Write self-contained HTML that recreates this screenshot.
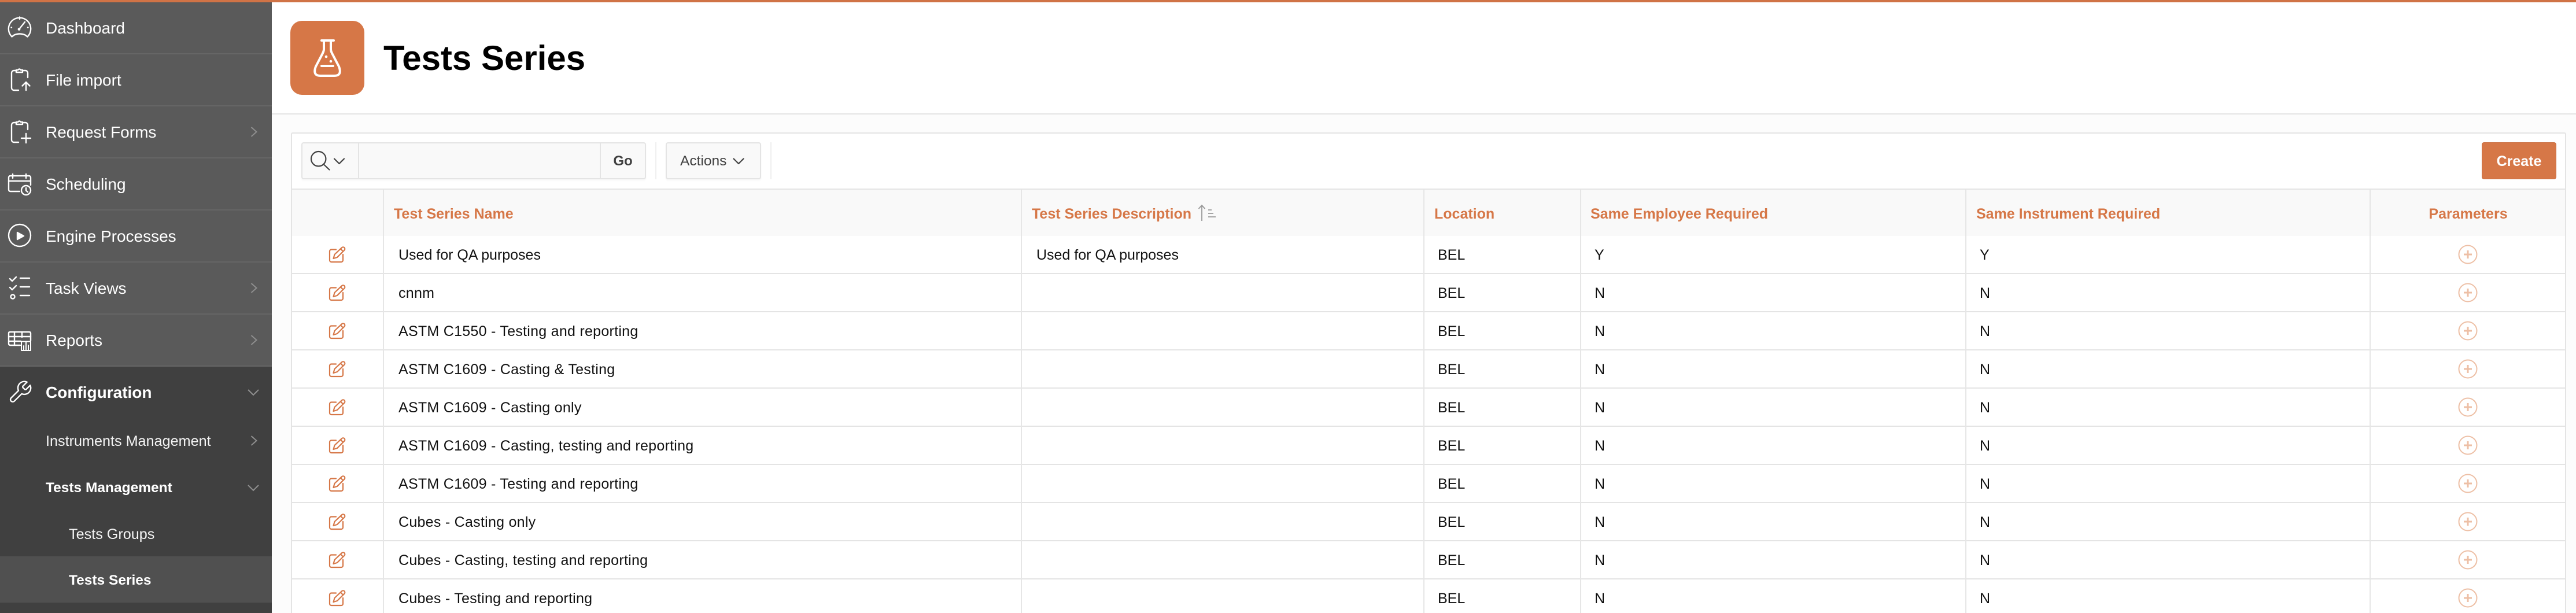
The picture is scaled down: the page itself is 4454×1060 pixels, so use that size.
<!DOCTYPE html>
<html lang="en">
<head>
<meta charset="utf-8">
<title>Tests Series</title>
<style>
html,body{margin:0;padding:0;width:4454px;height:1060px;overflow:hidden;background:#fcfcfc;font-family:"Liberation Sans",sans-serif;color:#111}
*{box-sizing:border-box}
#wrap{position:absolute;left:0;top:0;width:4454px;height:1060px;overflow:hidden;background:#fcfcfc}
.a{position:absolute}
#top{left:0;top:0;width:4454px;height:4px;background:#d07346;z-index:5}
#side{left:0;top:0;width:470px;height:1060px;background:#404040}
#sideTop{left:0;top:0;width:470px;height:634px;background:#5a5a5a}
.sep{left:0;width:470px;height:2px;background:#666}
.m{position:absolute;left:79px;height:40px;line-height:40px;font-size:28px;color:#fff;white-space:nowrap;margin-top:1px}
.s{position:absolute;left:79px;height:36px;line-height:36px;font-size:25.2px;color:#f4f4f4;white-space:nowrap;margin-top:1px}
.b{font-weight:bold}
#hl{left:0;top:962px;width:470px;height:80px;background:#505050}
#head{left:470px;top:4px;width:3984px;height:194px;background:#fff;border-bottom:2px solid #e4e4e4}
#ico{left:502px;top:36px;width:128px;height:128px;background:#d67747;border-radius:20px}
#title{left:663px;top:66px;height:70px;line-height:70px;font-size:60px;font-weight:bold;color:#000;white-space:nowrap}
#card{left:503px;top:229px;width:3934px;height:831px;background:#fff;border:2px solid #e4e4e4;border-bottom:0;border-radius:3px 3px 0 0}
#grp{left:521px;top:246px;width:596px;height:64px;background:#f9f9f9;border:2px solid #e4e4e4;border-radius:4px;box-shadow:0 2px 3px rgba(0,0,0,.04)}
#act{left:1151px;top:246px;width:165px;height:64px;background:#f9f9f9;border:2px solid #e4e4e4;border-radius:4px;box-shadow:0 2px 3px rgba(0,0,0,.04)}
.v{width:2px;background:#e6e6e6}
.d{background:#efefef}
#create{left:4291px;top:246px;width:129px;height:64px;background:#d67747;border:1px solid #c96c3e;border-radius:4px;color:#fff;font-weight:bold;font-size:25px;line-height:64px;text-align:center}
#hrow{left:505px;top:328px;width:3930px;height:80px;background:#f9f9f9}
.line{left:505px;width:3930px;height:2px;background:#e4e4e4}
.h{position:absolute;top:352px;height:36px;line-height:36px;font-size:25px;font-weight:bold;color:#d67747;white-space:nowrap}
.c{position:absolute;height:36px;line-height:36px;font-size:25px;color:#111;white-space:nowrap;margin-top:1px}
.n{letter-spacing:.27px}
svg{position:absolute;left:0;top:0;overflow:visible}
</style>
</head>
<body>
<div id="wrap">
<div class="a" id="side"></div>
<div class="a" id="sideTop"></div>
<div class="a" id="hl"></div>
<div class="a sep" style="top:92px"></div>
<div class="a sep" style="top:182px"></div>
<div class="a sep" style="top:272px"></div>
<div class="a sep" style="top:362px"></div>
<div class="a sep" style="top:452px"></div>
<div class="a sep" style="top:542px"></div>
<div class="a sep" style="top:632px"></div>

<div class="m" style="top:28px">Dashboard</div>
<div class="m" style="top:118px">File import</div>
<div class="m" style="top:208px">Request Forms</div>
<div class="m" style="top:298px">Scheduling</div>
<div class="m" style="top:388px">Engine Processes</div>
<div class="m" style="top:478px">Task Views</div>
<div class="m" style="top:568px">Reports</div>
<div class="m b" style="top:658px">Configuration</div>
<div class="s" style="top:744px">Instruments Management</div>
<div class="s b" style="top:825px;font-size:24.5px;color:#fff">Tests Management</div>
<div class="s" style="top:905px;left:119px">Tests Groups</div>
<div class="s b" style="top:985px;left:119px;font-size:24.5px;color:#fff">Tests Series</div>

<div class="a" id="head"></div>
<div class="a" id="top"></div>
<div class="a" id="ico"></div>
<div class="a" id="title">Tests Series</div>

<div class="a" id="card"></div>
<div class="a" id="grp"></div>
<div class="a v" style="left:619px;top:247px;height:62px;background:#e4e4e4"></div>
<div class="a v" style="left:1037px;top:247px;height:62px;background:#e4e4e4"></div>
<div class="a" style="left:1039px;top:262px;width:76px;height:34px;line-height:34px;text-align:center;font-size:24px;font-weight:bold;color:#404040">Go</div>
<div class="a v d" style="left:1133px;top:246px;height:64px"></div>
<div class="a" id="act"></div>
<div class="a" style="left:1176px;top:261px;height:36px;line-height:36px;font-size:24.5px;color:#404040">Actions</div>
<div class="a v d" style="left:1332px;top:246px;height:64px"></div>
<div class="a" id="create">Create</div>

<div class="a" id="hrow"></div>
<div class="a line" style="top:326px"></div>
<div class="h" style="left:681px">Test Series Name</div>
<div class="h" style="left:1784px">Test Series Description</div>
<div class="h" style="left:2480px">Location</div>
<div class="h" style="left:2750px">Same Employee Required</div>
<div class="h" style="left:3417px">Same Instrument Required</div>
<div class="h" style="left:4098px;width:339px;text-align:center">Parameters</div>

<div class="a line" style="top:472px"></div>
<div class="a line" style="top:538px"></div>
<div class="a line" style="top:604px"></div>
<div class="a line" style="top:670px"></div>
<div class="a line" style="top:736px"></div>
<div class="a line" style="top:802px"></div>
<div class="a line" style="top:868px"></div>
<div class="a line" style="top:934px"></div>
<div class="a line" style="top:1000px"></div>

<div class="a v" style="left:662px;top:328px;height:732px"></div>
<div class="a v" style="left:1765px;top:328px;height:732px"></div>
<div class="a v" style="left:2461px;top:328px;height:732px"></div>
<div class="a v" style="left:2732px;top:328px;height:732px"></div>
<div class="a v" style="left:3398px;top:328px;height:732px"></div>
<div class="a v" style="left:4097px;top:328px;height:732px"></div>

<div class="c" style="left:689px;top:422px">Used for QA purposes</div><div class="c" style="left:1792px;top:422px">Used for QA purposes</div><div class="c" style="left:2486px;top:422px">BEL</div><div class="c" style="left:2757px;top:422px">Y</div><div class="c" style="left:3423px;top:422px">Y</div>
<div class="c n" style="left:689px;top:488px">cnnm</div><div class="c" style="left:2486px;top:488px">BEL</div><div class="c" style="left:2757px;top:488px">N</div><div class="c" style="left:3423px;top:488px">N</div>
<div class="c n" style="left:689px;top:554px">ASTM C1550 - Testing and reporting</div><div class="c" style="left:2486px;top:554px">BEL</div><div class="c" style="left:2757px;top:554px">N</div><div class="c" style="left:3423px;top:554px">N</div>
<div class="c n" style="left:689px;top:620px">ASTM C1609 - Casting &amp; Testing</div><div class="c" style="left:2486px;top:620px">BEL</div><div class="c" style="left:2757px;top:620px">N</div><div class="c" style="left:3423px;top:620px">N</div>
<div class="c n" style="left:689px;top:686px">ASTM C1609 - Casting only</div><div class="c" style="left:2486px;top:686px">BEL</div><div class="c" style="left:2757px;top:686px">N</div><div class="c" style="left:3423px;top:686px">N</div>
<div class="c n" style="left:689px;top:752px">ASTM C1609 - Casting, testing and reporting</div><div class="c" style="left:2486px;top:752px">BEL</div><div class="c" style="left:2757px;top:752px">N</div><div class="c" style="left:3423px;top:752px">N</div>
<div class="c n" style="left:689px;top:818px">ASTM C1609 - Testing and reporting</div><div class="c" style="left:2486px;top:818px">BEL</div><div class="c" style="left:2757px;top:818px">N</div><div class="c" style="left:3423px;top:818px">N</div>
<div class="c n" style="left:689px;top:884px">Cubes - Casting only</div><div class="c" style="left:2486px;top:884px">BEL</div><div class="c" style="left:2757px;top:884px">N</div><div class="c" style="left:3423px;top:884px">N</div>
<div class="c n" style="left:689px;top:950px">Cubes - Casting, testing and reporting</div><div class="c" style="left:2486px;top:950px">BEL</div><div class="c" style="left:2757px;top:950px">N</div><div class="c" style="left:3423px;top:950px">N</div>
<div class="c n" style="left:689px;top:1016px">Cubes - Testing and reporting</div><div class="c" style="left:2486px;top:1016px">BEL</div><div class="c" style="left:2757px;top:1016px">N</div><div class="c" style="left:3423px;top:1016px">N</div>

<svg width="4454" height="1060" viewBox="0 0 4454 1060" xmlns="http://www.w3.org/2000/svg">
<defs>
<g id="ed" fill="none" stroke="#d67747" stroke-width="2.2" stroke-linecap="round" stroke-linejoin="round">
<path d="M12 5.5H4a3 3 0 0 0-3 3V24a3 3 0 0 0 3 3H21a3 3 0 0 0 3-3V14"/>
<path d="M7.5 21 L9.5 14 L22 2.2a3 3 0 0 1 4.4 4.4L14 19Z"/>
<path d="M20 4.5l4 4"/>
</g>
<g id="pl" fill="none" stroke="#edbfa5">
<circle cx="0" cy="0" r="15.5" stroke-width="2"/>
<path d="M-7 0H7M0-7V7" stroke-width="3"/>
</g>
<path id="cr" d="M0 0l9 8l-9 8" fill="none" stroke="#8f8f8f" stroke-width="2"/>
<path id="cd" d="M0 0l9 9l9-9" fill="none" stroke="#8f8f8f" stroke-width="2"/>
</defs>

<g fill="none" stroke="#fff" stroke-width="2.4" stroke-linecap="round" stroke-linejoin="round">
<path d="M20.5 63.5A19.2 19.2 0 1 1 47.5 63.5L43.5 60.5Q34 56.5 24.5 60.5Z"/>
<path d="M33 50.5L43 38"/><path d="M34 29.5V33M19.5 47.5H20M48 47.5H48.5"/>
<circle cx="33" cy="50.5" r="1.2" fill="#fff"/>

<path d="M27 122H24a4 4 0 0 0-4 4V152a4 4 0 0 0 4 4H32M40 122H44a4 4 0 0 1 4 4V134"/>
<path d="M28 125V121H31Q33.5 118 36 121H39V125Z"/>
<path d="M45 156V142M38.5 148.5L45 142L51.5 148.5"/>

<path d="M27 212H24a4 4 0 0 0-4 4V242a4 4 0 0 0 4 4H32M40 212H44a4 4 0 0 1 4 4V224"/>
<path d="M28 215V211H31Q33.5 208 36 211H39V215Z"/>
<path d="M45 231V247M37 239H53"/>

<path d="M34 331H18a3 3 0 0 1-3-3V307a3 3 0 0 1 3-3H50a3 3 0 0 1 3 3V320"/>
<path d="M15 313H53M22 301V308M45 301V308"/>
<circle cx="45" cy="329" r="8"/><path d="M45 325V329.5L48 332"/>

<circle cx="34" cy="407" r="19"/>
<path d="M30 402L41 408L30 414Z" fill="#fff"/>

<path d="M17 482L21 486L28 479M17 497L21 501L28 494"/>
<circle cx="22" cy="513" r="3.5"/>
<path d="M35 481H51M35 496H51M35 511H51"/>

<path d="M35 597H18Q15 597 15 594V576Q15 574 18 574H50Q53 574 53 576V589"/>
<path d="M15 582H53M15 590H36M25 574V597M38 574V583"/>
<path d="M37 606V590.5H53V606Z" stroke-width="2"/>
<path d="M41 606V598M45 606V592M49 606V597" stroke-width="2"/>

<g transform="translate(12.5 656) scale(1.85)" stroke-width="1.3">
<path d="M14.7 6.3a1 1 0 0 0 0 1.4l1.6 1.6a1 1 0 0 0 1.4 0l3.77-3.77a6 6 0 0 1-7.94 7.94l-6.91 6.91a2.12 2.12 0 0 1-3-3l6.91-6.91a6 6 0 0 1 7.94-7.94l-3.76 3.76z"/>
</g>
</g>
<use href="#cr" x="434.5" y="220"/>
<use href="#cr" x="434.5" y="490"/>
<use href="#cr" x="434.5" y="580"/>
<use href="#cr" x="434.5" y="754"/>
<use href="#cd" x="429" y="674"/>
<use href="#cd" x="429" y="839"/>

<g fill="none" stroke="#fff" stroke-width="4" stroke-linecap="round" stroke-linejoin="round">
<path d="M556 70H577"/>
<path d="M560 71V85Q560 88 558 92L546 115Q540 131 554 131H578Q592 131 586 115L574 92Q572 88 572 85V71"/>
<path d="M556 114H576"/>
</g>
<circle cx="564" cy="98" r="2.3" fill="#fff"/><circle cx="572" cy="106" r="2.3" fill="#fff"/>

<g fill="none" stroke="#404040" stroke-width="2.2" stroke-linecap="round" stroke-linejoin="round">
<circle cx="550.7" cy="274.7" r="12.7"/>
<path d="M559.5 284L569.5 293.5"/>
<path d="M578 274.5L586.5 283L595 274.5"/>
<path d="M1268.5 274.5L1277 283L1285.5 274.5"/>
</g>

<g fill="none" stroke="#999" stroke-width="1.8">
<path d="M2078 382V355M2072.5 361L2078 355L2083.5 361"/>
<path d="M2089 363H2095M2089 369H2098M2089 375H2102"/>
</g>

<use href="#ed" x="569" y="426"/>
<use href="#ed" x="569" y="492"/>
<use href="#ed" x="569" y="558"/>
<use href="#ed" x="569" y="624"/>
<use href="#ed" x="569" y="690"/>
<use href="#ed" x="569" y="756"/>
<use href="#ed" x="569" y="822"/>
<use href="#ed" x="569" y="888"/>
<use href="#ed" x="569" y="954"/>
<use href="#ed" x="569" y="1020"/>

<use href="#pl" x="4267" y="440"/>
<use href="#pl" x="4267" y="506"/>
<use href="#pl" x="4267" y="572"/>
<use href="#pl" x="4267" y="638"/>
<use href="#pl" x="4267" y="704"/>
<use href="#pl" x="4267" y="770"/>
<use href="#pl" x="4267" y="836"/>
<use href="#pl" x="4267" y="902"/>
<use href="#pl" x="4267" y="968"/>
<use href="#pl" x="4267" y="1034"/>
</svg>
</div>
</body>
</html>
